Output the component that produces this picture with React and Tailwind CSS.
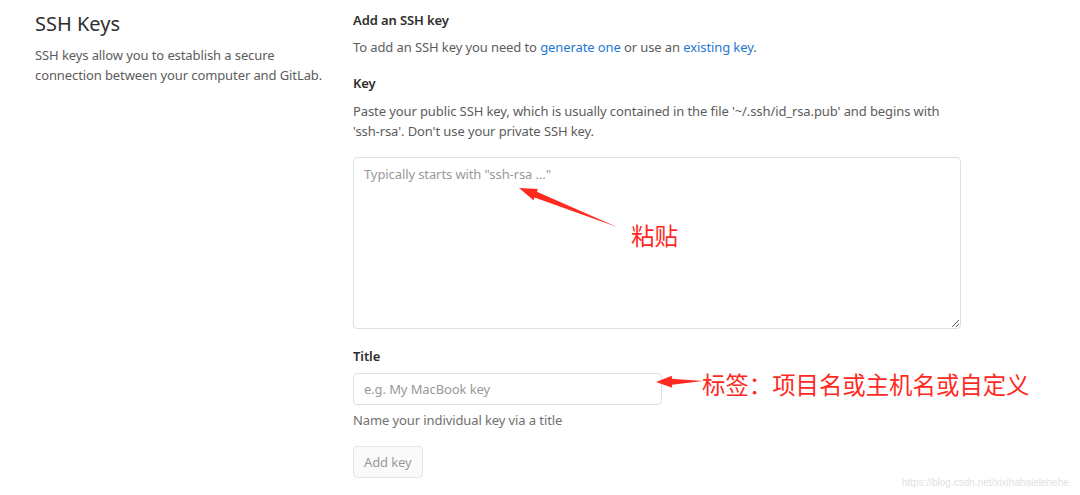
import React from "react";

const font = { fontFamily: '"Noto Sans", "Open Sans", sans-serif' };

function Arrow({ x1, y1, x2, y2, head = 16, width = 6 }) {
  // tapered arrow: thin at tail (x1,y1), wide head at tip (x2,y2)
  const dx = x2 - x1;
  const dy = y2 - y1;
  const len = Math.hypot(dx, dy);
  const ux = dx / len;
  const uy = dy / len;
  const nx = -uy;
  const ny = ux;
  const bx = x2 - ux * head;
  const by = y2 - uy * head;
  const pts = [
    [x1, y1],
    [bx + nx * (width / 2), by + ny * (width / 2)],
    [bx + nx * width, by + ny * width],
    [x2, y2],
    [bx - nx * width, by - ny * width],
    [bx - nx * (width / 2), by - ny * (width / 2)],
  ]
    .map((p) => p.join(","))
    .join(" ");
  return <polygon points={pts} fill="#ff2a1f" />;
}

export default function App() {
  return (
    <div className="relative w-[1080px] h-[495px] bg-white overflow-hidden" style={font}>
      <div className="flex">
        {/* left */}
        <div className="w-[353px] pl-[35px] pr-[20px] pt-[11px] shrink-0">
          <h1 className="text-[20px] leading-[26px] text-[#2e2e2e] font-normal">SSH Keys</h1>
          <p className="mt-[8px] text-[13px] leading-[20px] tracking-[-0.1px] text-[#5c5c5c]">
            SSH keys allow you to establish a secure
            <br />
            connection between your computer and GitLab.
          </p>
        </div>

        {/* right */}
        <div className="w-[607px] pt-[10px] text-[13px] leading-[20px] tracking-[-0.1px] text-[#5c5c5c]">
          <div className="font-semibold text-[#2e2e2e]">Add an SSH key</div>
          <p className="mt-[7px]">
            To add an SSH key you need to <span className="text-[#1f78d1]">generate one</span> or use an{" "}
            <span className="text-[#1f78d1]">existing key</span>.
          </p>

          <div className="mt-[16px] font-semibold text-[#2e2e2e]">Key</div>
          <p className="mt-[8px]">
            Paste your public SSH key, which is usually contained in the file '~/.ssh/id_rsa.pub' and begins with
            'ssh-rsa'. Don't use your private SSH key.
          </p>
          <textarea
            className="mt-[16px] block w-[608px] h-[172px] border border-[#dfdfdf] rounded-[4px] px-[10px] pt-[5px] text-[13px] leading-[22px] placeholder:text-[#999] outline-none"
            placeholder={'Typically starts with "ssh-rsa …"'}
          />

          <div className="mt-[17px] font-semibold text-[#2e2e2e]">Title</div>
          <input
            className="mt-[7px] block w-[309px] h-[32px] border border-[#dfdfdf] rounded-[4px] px-[10px] text-[13px] placeholder:text-[#999] outline-none"
            placeholder="e.g. My MacBook key"
          />
          <p className="mt-[5px] text-[#707070]">Name your individual key via a title</p>
          <button className="mt-[16px] h-[32px] px-[10px] border border-[#e5e5e5] rounded-[4px] bg-[#fafafa] text-[#999]">
            Add key
          </button>
        </div>
      </div>

      {/* annotations */}
      <svg className="absolute left-0 top-0 pointer-events-none" width="1080" height="495">
        <Arrow x1={617} y1={227} x2={519} y2={188} head={18} width={6} />
        <Arrow x1={703} y1={381} x2={656} y2={382} head={16} width={6} />
      </svg>
      <div
        className="absolute left-[631px] top-[220px] text-[23.5px] leading-[30px] text-[#ff2a1f]"
        style={{ fontFamily: '"Noto Sans CJK SC", sans-serif' }}
      >
        粘贴
      </div>
      <div
        className="absolute left-[702px] top-[369px] text-[23.4px] leading-[30px] text-[#ff2a1f]"
        style={{ fontFamily: '"Noto Sans CJK SC", sans-serif' }}
      >
        标签：项目名或主机名或自定义
      </div>
      <div
        className="absolute left-[902px] top-[476px] text-[10px] leading-[14px] text-[#e2e2e2] whitespace-nowrap"
        style={{ fontFamily: '"Liberation Sans", Arial, sans-serif' }}
      >
        https://blog.csdn.net/xixihahalelehehe
      </div>
    </div>
  );
}
